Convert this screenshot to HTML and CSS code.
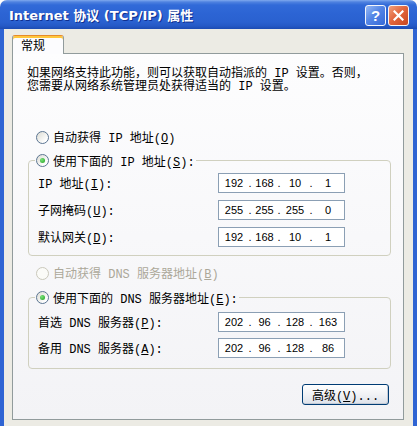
FILE: index.html
```html
<!DOCTYPE html>
<html lang="zh-CN">
<head>
<meta charset="utf-8">
<title>Internet 协议 (TCP/IP) 属性</title>
<link rel="stylesheet" href="styles.css">
</head>
<body>
<div class="window">
  <div class="titlebar">
    <span class="title">Internet 协议 (TCP/IP) 属性</span>
    <div class="tbuttons">
      <span class="tbtn help">?</span>
      <span class="tbtn close"><svg width="11" height="11" viewBox="0 0 11 11"><path d="M1.5 1.5 L9.5 9.5 M9.5 1.5 L1.5 9.5" stroke="#fff" stroke-width="2.2" stroke-linecap="square"/></svg></span>
    </div>
  </div>
  <div class="frame">
    <div class="tabs"><div class="tab">常规</div></div>
    <div class="pane">
      <p class="desc">如果网络支持此功能，则可以获取自动指派的 IP 设置。否则，<br>您需要从网络系统管理员处获得适当的 IP 设置。</p>
      <div class="opt r1"><span class="radio"></span><span>自动获得 IP 地址(<u>O</u>)</span></div>
      <fieldset class="group g1">
        <legend><span class="lg"><span class="radio on"></span><span>使用下面的 IP 地址(<u>S</u>):</span></span></legend>
        <div class="fields">
          <div class="row"><span class="label">IP 地址(<u>I</u>):</span><div class="ip"><span class="o1">192</span><span class="d">.</span><span class="o2">168</span><span class="d">.</span><span class="o3">10</span><span class="d">.</span><span class="o4">1</span></div></div>
          <div class="row"><span class="label">子网掩码(<u>U</u>):</span><div class="ip"><span class="o1">255</span><span class="d">.</span><span class="o2">255</span><span class="d">.</span><span class="o3">255</span><span class="d">.</span><span class="o4">0</span></div></div>
          <div class="row"><span class="label">默认网关(<u>D</u>):</span><div class="ip"><span class="o1">192</span><span class="d">.</span><span class="o2">168</span><span class="d">.</span><span class="o3">10</span><span class="d">.</span><span class="o4">1</span></div></div>
        </div>
      </fieldset>
      <div class="opt r3 disabled"><span class="radio off"></span><span>自动获得 DNS 服务器地址(<u>B</u>)</span></div>
      <fieldset class="group g2">
        <legend><span class="lg"><span class="radio on"></span><span>使用下面的 DNS 服务器地址(<u>E</u>):</span></span></legend>
        <div class="fields">
          <div class="row"><span class="label">首选 DNS 服务器(<u>P</u>):</span><div class="ip"><span class="o1">202</span><span class="d">.</span><span class="o2">96</span><span class="d">.</span><span class="o3">128</span><span class="d">.</span><span class="o4">163</span></div></div>
          <div class="row"><span class="label">备用 DNS 服务器(<u>A</u>):</span><div class="ip"><span class="o1">202</span><span class="d">.</span><span class="o2">96</span><span class="d">.</span><span class="o3">128</span><span class="d">.</span><span class="o4">86</span></div></div>
        </div>
      </fieldset>
      <div class="actions"><button class="btn">高级(<u>V</u>)...</button></div>
    </div>
  </div>
</div>
</body>
</html>
```

FILE: styles.css
```css
* { box-sizing: border-box; }
html, body { margin: 0; padding: 0; }
body { width: 417px; height: 426px; overflow: hidden; background: #ffffff; }

.window {
  width: 417px; height: 426px;
  display: flex; flex-direction: column;
  border-radius: 7px 7px 0 0; overflow: hidden;
  background: #ecebe4;
}

.titlebar {
  height: 29px; flex: none;
  display: flex; align-items: center; justify-content: space-between;
  padding: 0 8px 0 9px;
  background: linear-gradient(to bottom, #80a9ee 0px, #4f82e0 2px, #316ad8 5px, #2c64d4 14px, #2a61d0 22px, #2559c6 26px, #1c4bb2 29px);
}
.title {
  color: #fff;
  font: bold 13px "DejaVu Sans", "Noto Sans CJK SC", sans-serif;
  text-shadow: 1px 1px 0 #10308f;
  white-space: nowrap;
}
.tbuttons { display: flex; gap: 2px; padding-top: 1px; }
.tbtn {
  width: 21px; height: 21px;
  border: 1px solid #f4f6fb; border-radius: 3px;
  display: flex; align-items: center; justify-content: center;
}
.help {
  background: linear-gradient(135deg, #97b9f4 0%, #5486e6 45%, #3468d8 100%);
  color: #fff; font: bold 15px "Liberation Sans", sans-serif;
}
.close {
  background: linear-gradient(135deg, #f2a07c 0%, #e2673f 45%, #c9461f 100%);
}

.frame {
  flex: 1;
  display: flex; flex-direction: column;
  border-left: 4px solid #2f64d3; border-right: 4px solid #2f64d3;
  padding: 6px 9px 0 8px;
}

.tabs { display: flex; }
.tab {
  position: relative; z-index: 1;
  width: 52px; height: 19px; margin-bottom: -1px;
  border: 1px solid #919b9c; border-top: 1px solid #e68b2c; border-bottom: none;
  border-radius: 3px 3px 0 0;
  box-shadow: inset 0 2px 0 #ffc73c;
  background: #fcfcfe;
  padding: 1px 0 0 8px;
  font: 12px/16px "Noto Sans CJK SC", sans-serif; color: #000;
}

.pane {
  height: 367px; flex: none;
  border: 1px solid #919b9c;
  background: linear-gradient(#fdfdfe, #f3f3f6);
  padding: 14px 12px 0 14px;
  font: 12px "Liberation Mono", "Noto Sans CJK SC", monospace;
  color: #000;
}
.desc { margin: 0; line-height: 13px; white-space: nowrap; }

.opt { display: flex; align-items: center; gap: 4px; height: 16px; margin-left: 9px; white-space: nowrap; }
.r1 { margin-top: 35px; }
.r3 { margin-top: 9px; }
.disabled { color: #aca899; }

.radio {
  width: 13px; height: 13px; flex: none;
  border: 1px solid #5b7592; border-radius: 50%;
  background: linear-gradient(135deg, #dcdcd4, #ffffff 80%);
  display: inline-flex; align-items: center; justify-content: center;
}
.radio.on::after {
  content: ""; width: 5px; height: 5px; border-radius: 50%;
  background: radial-gradient(circle at 35% 35%, #7ae27a, #21a121);
}
.radio.off { border-color: #cac8bb; background: #fbfbf8; }

.group {
  margin: 0 0 0 1px;
  border: 1px solid #d0d0bf; border-radius: 4px;
  min-width: 0;
}
.g1 { margin-top: 7px; padding: 4px 0 8px 6px; }
.g2 { margin-top: 8px; padding: 6px 0 10px 6px; }
.group legend { padding: 0 1px; height: 17px; }
.lg { display: flex; align-items: center; gap: 4px; height: 17px; white-space: nowrap; }

.fields { display: flex; flex-direction: column; gap: 7px; }
.g2 .fields { gap: 6px; }
.row { display: grid; grid-template-columns: 183px 127px; align-items: center; height: 20px; }
.label { padding-left: 3px; white-space: nowrap; }

.ip {
  height: 20px;
  border: 1px solid #8b9fb4; background: #fff;
  display: flex; align-items: center;
  font: 11px "Liberation Sans", sans-serif; color: #000;
}
.ip span { display: flex; justify-content: center; }
.o1 { width: 30px; }
.o2 { width: 27px; }
.o3 { width: 30px; }
.o4 { width: 32px; }
.d { width: 2px; }

.actions { display: flex; justify-content: flex-end; margin-top: 15px; padding-right: 2px; }
.btn {
  width: 87px; height: 21px; padding: 0;
  border: 1px solid #003c74; border-radius: 3px;
  background: linear-gradient(#ffffff, #f1f2f5 50%, #dde2ea);
  box-shadow: inset -1px -1px 0 #c5cbd6;
  font: 12px "Liberation Mono", "Noto Sans CJK SC", monospace; color: #000;
}
```
